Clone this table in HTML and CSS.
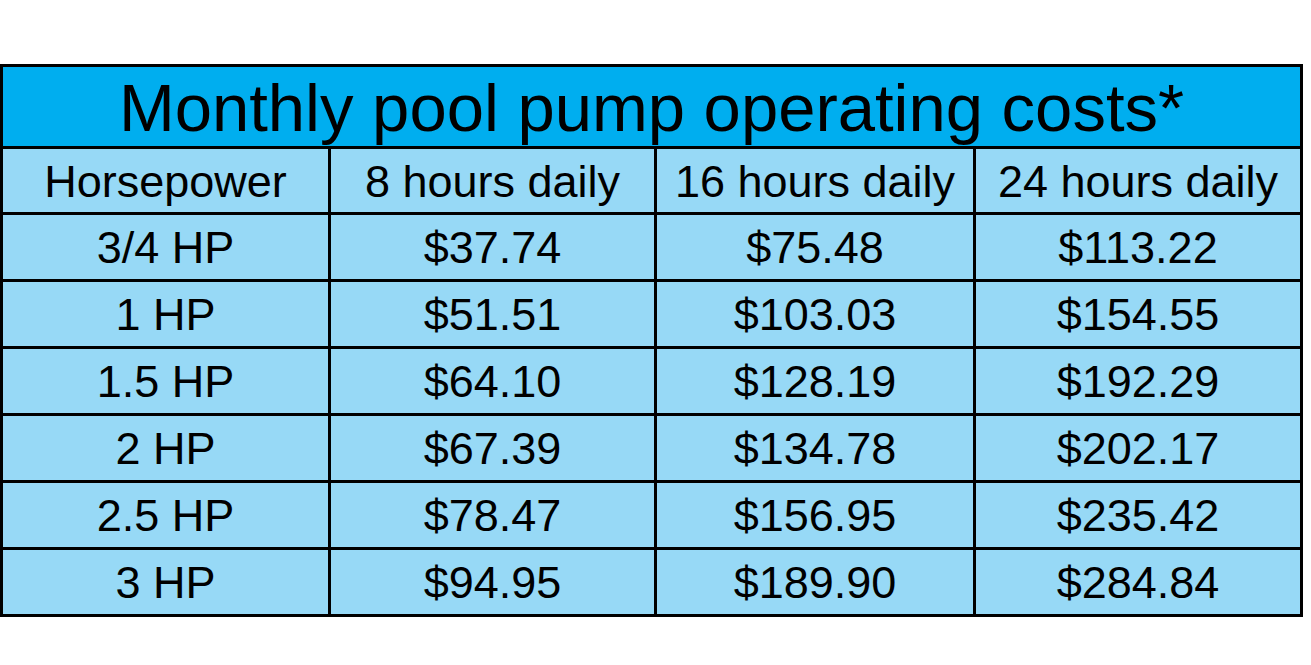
FILE: index.html
```html
<!DOCTYPE html>
<html>
<head>
<meta charset="utf-8">
<link rel="stylesheet" href="styles.css">
</head>
<body>
<div class="table">
  <div class="title">Monthly pool pump operating costs*</div>
  <div class="cell">Horsepower</div>
  <div class="cell">8 hours daily</div>
  <div class="cell">16 hours daily</div>
  <div class="cell">24 hours daily</div>

  <div class="cell">3/4 HP</div>
  <div class="cell">$37.74</div>
  <div class="cell">$75.48</div>
  <div class="cell">$113.22</div>

  <div class="cell">1 HP</div>
  <div class="cell">$51.51</div>
  <div class="cell">$103.03</div>
  <div class="cell">$154.55</div>

  <div class="cell">1.5 HP</div>
  <div class="cell">$64.10</div>
  <div class="cell">$128.19</div>
  <div class="cell">$192.29</div>

  <div class="cell">2 HP</div>
  <div class="cell">$67.39</div>
  <div class="cell">$134.78</div>
  <div class="cell">$202.17</div>

  <div class="cell">2.5 HP</div>
  <div class="cell">$78.47</div>
  <div class="cell">$156.95</div>
  <div class="cell">$235.42</div>

  <div class="cell">3 HP</div>
  <div class="cell">$94.95</div>
  <div class="cell">$189.90</div>
  <div class="cell">$284.84</div>
</div>
</body>
</html>
```

FILE: styles.css
```css
html, body {
  margin: 0;
  padding: 0;
  background: #ffffff;
}

body {
  font-family: "Liberation Sans", Arial, sans-serif;
  color: #000000;
  padding-top: 64px;
}

.table {
  width: 1303px;
  height: 553px;
  box-sizing: border-box;
  background: #000000;
  padding: 3px;
  display: grid;
  grid-template-columns: 325px 323px 316px 324px;
  grid-template-rows: 79px 63px repeat(6, 64px);
  gap: 3px;
}

.title {
  grid-column: 1 / -1;
  background: #00aeef;
  font-size: 67px;
  display: flex;
  align-items: center;
  justify-content: center;
  line-height: 1;
  padding-top: 2px;
}

.cell {
  background: #97d9f6;
  font-size: 45px;
  display: flex;
  align-items: center;
  justify-content: center;
  line-height: 1;
  padding-top: 1px;
}
```
